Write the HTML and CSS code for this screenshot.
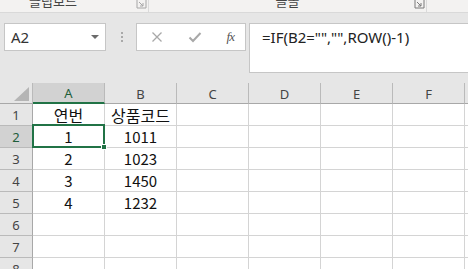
FILE: index.html
```html
<!DOCTYPE html>
<html lang="ko">
<head>
  <meta charset="UTF-8">
  <title>Excel</title>
  <link rel="stylesheet" href="styles.css">
</head>
<body>
  <div class="ribbon">
    <div class="group group-clip">
      <span class="group-label">클립보드</span>
      <svg class="launcher" width="11" height="9" viewBox="0 0 11 9"><path d="M1 0V8H10V0" fill="none" stroke="#a6a6a6"/><path d="M3 2L7 6M7 3V6H4" fill="none" stroke="#a6a6a6"/></svg>
    </div>
    <div class="group group-font">
      <span class="group-label">글꼴</span>
      <svg class="launcher" width="11" height="9" viewBox="0 0 11 9"><path d="M1 0V8H10V0" fill="none" stroke="#7a7a7a"/><path d="M3 2L7 6M7 3V6H4" fill="none" stroke="#7a7a7a"/></svg>
    </div>
  </div>

  <div class="formula-bar">
    <div class="name-box">
      <span>A2</span>
      <svg width="8" height="5" viewBox="0 0 8 5"><path d="M0 0H8L4 4Z" fill="#6b6b6b"/></svg>
    </div>
    <div class="grip"><i></i><i></i><i></i></div>
    <div class="fx-box">
      <svg width="12" height="12" viewBox="0 0 12 12"><path d="M1.5 1.5L10.5 10.5M10.5 1.5L1.5 10.5" stroke="#a8a8a8" stroke-width="1.3"/></svg>
      <svg width="14" height="12" viewBox="0 0 14 12"><path d="M1.5 6.5L5 10L12.5 2" fill="none" stroke="#a8a8a8" stroke-width="2"/></svg>
      <span class="fx">fx</span>
    </div>
    <div class="formula-input">=IF(B2="","",ROW()-1)</div>
  </div>

  <div class="sheet">
    <div class="corner"><svg width="15" height="14" viewBox="0 0 15 14"><path d="M15 0V14H0Z" fill="#b5b5b5"/></svg></div>
    <div class="col-head active">A</div>
    <div class="col-head">B</div>
    <div class="col-head">C</div>
    <div class="col-head">D</div>
    <div class="col-head">E</div>
    <div class="col-head">F</div>
    <div class="col-head"></div>

    <div class="row-head">1</div>
    <div class="cell">연번</div><div class="cell">상품코드</div><div class="cell"></div><div class="cell"></div><div class="cell"></div><div class="cell"></div><div class="cell"></div>

    <div class="row-head active">2</div>
    <div class="cell num selected">1<span class="handle"></span></div><div class="cell num">1011</div><div class="cell"></div><div class="cell"></div><div class="cell"></div><div class="cell"></div><div class="cell"></div>

    <div class="row-head">3</div>
    <div class="cell num">2</div><div class="cell num">1023</div><div class="cell"></div><div class="cell"></div><div class="cell"></div><div class="cell"></div><div class="cell"></div>

    <div class="row-head">4</div>
    <div class="cell num">3</div><div class="cell num">1450</div><div class="cell"></div><div class="cell"></div><div class="cell"></div><div class="cell"></div><div class="cell"></div>

    <div class="row-head">5</div>
    <div class="cell num">4</div><div class="cell num">1232</div><div class="cell"></div><div class="cell"></div><div class="cell"></div><div class="cell"></div><div class="cell"></div>

    <div class="row-head">6</div>
    <div class="cell"></div><div class="cell"></div><div class="cell"></div><div class="cell"></div><div class="cell"></div><div class="cell"></div><div class="cell"></div>

    <div class="row-head">7</div>
    <div class="cell"></div><div class="cell"></div><div class="cell"></div><div class="cell"></div><div class="cell"></div><div class="cell"></div><div class="cell"></div>

    <div class="row-head">8</div>
    <div class="cell"></div><div class="cell"></div><div class="cell"></div><div class="cell"></div><div class="cell"></div><div class="cell"></div><div class="cell"></div>
  </div>
</body>
</html>
```

FILE: styles.css
```css
:root {
  --excel-green: #217346;
  --grid-line: #d4d4d4;
  --head-bg: #e6e6e6;
  --head-active: #d2d2d2;
  --head-line: #bababa;
}

* {
  margin: 0;
  padding: 0;
  box-sizing: border-box;
}

body {
  width: 468px;
  height: 269px;
  overflow: hidden;
  background: #ffffff;
  font-family: "Noto Sans CJK KR", "Noto Sans", sans-serif;
  color: #222;
}

/* ribbon bottom edge */
.ribbon {
  display: flex;
  height: 13px;
  background: #f3f2f1;
  border-bottom: 1px solid #d9d9d9;
  overflow: hidden;
}

.group {
  position: relative;
  display: flex;
  justify-content: center;
  border-right: 1px solid #dadada;
  height: 12px;
}

.group-clip {
  width: 149px;
  padding-right: 42px;
}

.group-font {
  width: 278px;
}

.group-label {
  font-size: 13px;
  line-height: 13px;
  margin-top: -6px;
  color: #444;
}

.launcher {
  position: absolute;
  right: 1px;
  top: 0;
}

.formula-bar {
  display: flex;
  align-items: flex-start;
  height: 70px;
  padding: 10px 0 0 4px;
  background: #e6e6e6;
}

.name-box {
  display: flex;
  align-items: center;
  justify-content: space-between;
  width: 102px;
  height: 28px;
  padding: 0 6px 0 6px;
  background: #fff;
  border: 1px solid #c6c6c6;
  font-family: "Noto Sans", sans-serif;
  font-size: 15px;
  color: #333;
}

.grip {
  display: flex;
  flex-direction: column;
  gap: 2px;
  width: 30px;
  padding: 9px 0 0 15px;
}

.grip i {
  display: block;
  width: 2px;
  height: 2px;
  background: #a9a9a9;
}

.fx-box {
  display: flex;
  align-items: center;
  justify-content: space-between;
  width: 110px;
  height: 28px;
  padding: 0 11px 0 14px;
  background: #fff;
  border: 1px solid #c6c6c6;
}

.fx {
  font-family: "Liberation Serif", serif;
  font-style: italic;
  font-size: 13px;
  color: #555;
  letter-spacing: -1px;
}

.formula-input {
  flex: 1;
  height: 50px;
  margin-left: 3px;
  padding: 3px 0 0 12px;
  background: #fff;
  border: 1px solid #c6c6c6;
  border-right: none;
  font-family: "Noto Sans", sans-serif;
  font-size: 15px;
  line-height: 20px;
  color: #222;
}

.sheet {
  display: grid;
  grid-template-columns: 33px repeat(7, 72px);
  grid-template-rows: 21px repeat(8, 22px);
  background: #fff;
}

.corner,
.col-head,
.row-head {
  display: flex;
  align-items: center;
  justify-content: center;
  background: var(--head-bg);
  color: #444;
  font-family: "Noto Sans", sans-serif;
  font-size: 13px;
}

.corner {
  align-items: flex-end;
  justify-content: flex-end;
  padding: 0 3px 2px 0;
  border-right: 1px solid var(--head-line);
  border-bottom: 1px solid #a8a8a8;
}

.col-head {
  border-right: 1px solid var(--head-line);
  border-bottom: 1px solid #a8a8a8;
  padding-top: 1px;
}

.col-head.active {
  background: var(--head-active);
  border-bottom: 2px solid var(--excel-green);
  color: #1e5e3a;
}

.row-head {
  border-right: 1px solid #a8a8a8;
  border-bottom: 1px solid var(--head-line);
}

.row-head.active {
  background: var(--head-active);
  color: #1e5e3a;
}

.cell {
  position: relative;
  display: flex;
  align-items: center;
  justify-content: center;
  border-right: 1px solid var(--grid-line);
  border-bottom: 1px solid var(--grid-line);
  font-size: 16px;
  line-height: 20px;
  color: #111;
}

.cell.num {
  font-size: 15px;
}

.cell.selected::after {
  content: "";
  position: absolute;
  inset: -2px -1px -1px -1px;
  border: 2px solid var(--excel-green);
}

.handle {
  position: absolute;
  right: -3px;
  bottom: -3px;
  width: 6px;
  height: 6px;
  background: var(--excel-green);
  border: 1px solid #fff;
  z-index: 2;
}
```
